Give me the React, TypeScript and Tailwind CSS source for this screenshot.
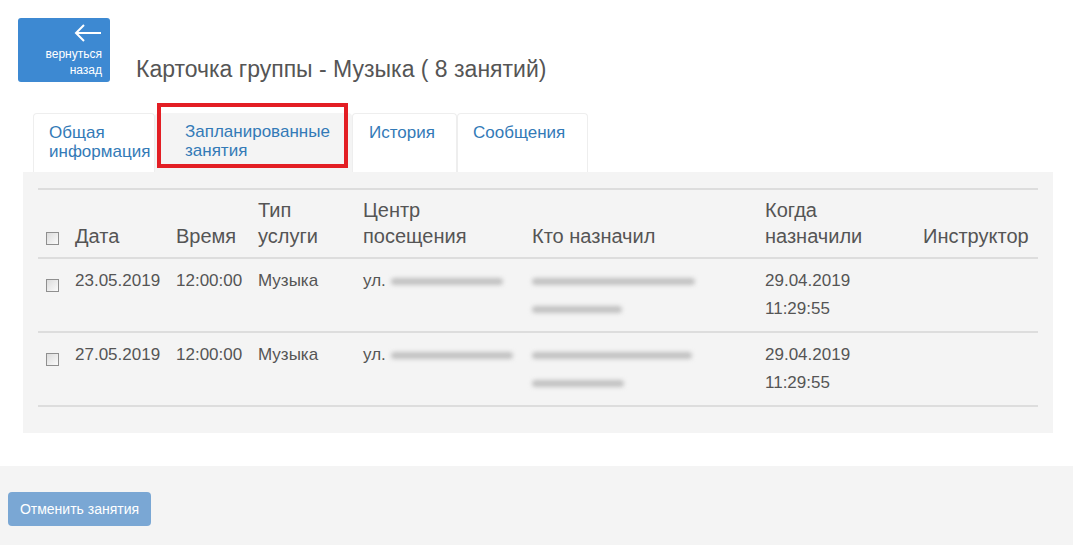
import React from 'react';

const cols = 'grid grid-cols-[29px_101px_82px_105px_169px_233px_158px_1fr]';

function Smear({ w, className = '' }: { w: string; className?: string }) {
  return <span className={`inline-block h-[7px] rounded-full bg-[#c2c2c2] blur-[2px] align-middle ${w} ${className}`} />;
}

function Box() {
  return (
    <span className="inline-block h-[13px] w-[13px] border border-[#8f8f8f] bg-gradient-to-br from-[#dcdcdc] to-[#fbfbfb]" />
  );
}

const rows = [
  { date: '23.05.2019', street: 'w-[112px]', who1: 'w-[163px]', who2: 'w-[90px]' },
  { date: '27.05.2019', street: 'w-[122px]', who1: 'w-[160px]', who2: 'w-[92px]' },
];

export default function App() {
  return (
    <div className="min-h-[545px] bg-white font-['Liberation_Sans',Arial,sans-serif] text-[#555]">
      <div className="flex items-end gap-[26px] pl-[18px] pt-[18px]">
        <button className="flex h-[64px] w-[92px] flex-col items-end rounded-[3px] bg-[#3d89d2] pr-[8px] pt-[6px] text-white">
          <svg width="28" height="18" viewBox="0 0 28 18" fill="none" stroke="white" strokeWidth="2">
            <path d="M27 9H2M10 1L2 9l8 8" />
          </svg>
          <span className="mt-[4px] text-right text-[12px] leading-[16px]">
            вернуться
            <br />
            назад
          </span>
        </button>
        <h1 className="mb-[-2px] text-[23px] leading-[30px] text-[#555]">Карточка группы - Музыка ( 8 занятий)</h1>
      </div>

      <div className="relative mt-[31px] flex pl-[33px]">
        <div className="h-[59px] w-[122px] rounded-t-[4px] border border-b-0 border-[#eee] pl-[15px] pt-[9px] text-[17px] leading-[19px] text-[#337ab7]">
          Общая
          <br />
          информация
        </div>
        <div className="h-[59px] w-[197px] rounded-t-[4px] bg-[#f4f4f4] pl-[30px] pt-[9px] text-[17px] leading-[19px] text-[#337ab7]">
          Запланированные
          <br />
          занятия
        </div>
        <div className="h-[59px] w-[105px] rounded-t-[4px] border border-b-0 border-[#eee] pl-[16px] pt-[9px] text-[17px] leading-[19px] text-[#337ab7]">
          История
        </div>
        <div className="h-[59px] w-[131px] rounded-t-[4px] border border-b-0 border-[#eee] pl-[15px] pt-[9px] text-[17px] leading-[19px] text-[#337ab7]">
          Сообщения
        </div>
        <div className="pointer-events-none absolute left-[157px] top-[-10px] h-[65px] w-[191px] border-[4px] border-[#e31e24]" />
      </div>

      <div className="ml-[23px] mr-[20px] bg-[#f4f4f4] px-[15px] pb-[26px] pt-[16px]">
        <div className={`${cols} items-end border-y-2 border-[#ddd] text-[20px] leading-[26px]`}>
          <div className="pb-[6px] pl-[8px]">
            <Box />
          </div>
          <div className="pb-[8px] pl-[8px] pt-[7px]">Дата</div>
          <div className="pb-[8px] pl-[8px] pt-[7px]">Время</div>
          <div className="pb-[8px] pl-[8px] pt-[7px]">
            Тип
            <br />
            услуги
          </div>
          <div className="pb-[8px] pl-[8px] pt-[7px]">
            Центр
            <br />
            посещения
          </div>
          <div className="pb-[8px] pl-[8px] pt-[7px]">Кто назначил</div>
          <div className="pb-[8px] pl-[8px] pt-[7px]">
            Когда
            <br />
            назначили
          </div>
          <div className="pb-[8px] pl-[8px] pt-[7px]">Инструктор</div>
        </div>
        {rows.map((r) => (
          <div key={r.date} className={`${cols} items-start border-b-2 border-[#ddd] text-[17px] leading-[28px]`}>
            <div className="pl-[8px] pt-[14px]">
              <Box />
            </div>
            <div className="py-[8px] pl-[8px]">{r.date}</div>
            <div className="py-[8px] pl-[8px]">12:00:00</div>
            <div className="py-[8px] pl-[8px]">Музыка</div>
            <div className="whitespace-nowrap py-[8px] pl-[8px]">
              ул. <Smear w={r.street} />
            </div>
            <div className="flex flex-col py-[8px] pl-[8px]">
              <span className="flex h-[28px] items-center">
                <Smear w={r.who1} />
              </span>
              <span className="flex h-[28px] items-center">
                <Smear w={r.who2} />
              </span>
            </div>
            <div className="py-[8px] pl-[8px]">
              29.04.2019
              <br />
              11:29:55
            </div>
            <div className="py-[8px] pl-[8px]" />
          </div>
        ))}
      </div>

      <div className="mt-[33px] bg-[#f4f4f4] pb-[20px] pl-[8px] pt-[26px]">
        <button className="h-[34px] w-[143px] rounded-[4px] bg-[#7aa7d4] text-[14px] text-white">Отменить занятия</button>
      </div>
    </div>
  );
}
